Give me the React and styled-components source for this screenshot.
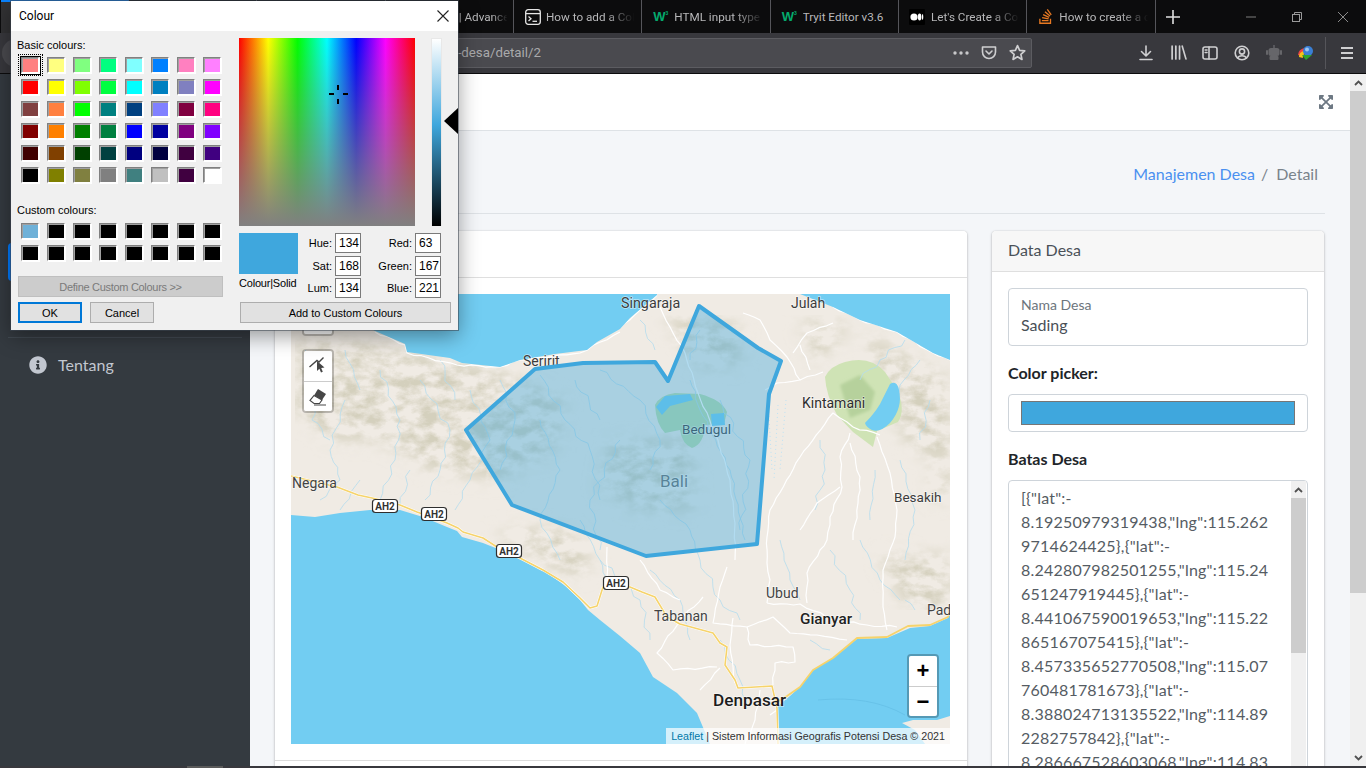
import React from 'react';
import styled, { createGlobalStyle } from 'styled-components';
import { FaInfoCircle, FaExpandArrowsAlt, FaStackOverflow } from 'react-icons/fa';

const Global = createGlobalStyle`
  html, body { margin: 0; padding: 0; overflow: hidden; background: #38383d; }
  * { box-sizing: border-box; }
`;

const Screen = styled.div`
  position: relative; width: 1366px; height: 768px; overflow: hidden;
  display: flex; flex-direction: column;
  font-family: Lato, "Open Sans", sans-serif; font-size: 16px; color: #212529;
`;

/* ---------- browser chrome ---------- */
const TabStrip = styled.div`
  height: 33px; flex: none; display: flex; background: #0c0c0d; padding-left: 0.7px;
`;
const Tab = styled.div`
  flex: 0 0 128.33px; height: 33px; display: flex; align-items: center; gap: 5px;
  padding-left: ${p => p.$pl || 10}px; padding-right: 4px; border-right: 1px solid #55555a;
  background: ${p => (p.$active ? '#323234' : 'transparent')};
  border-top: ${p => (p.$active ? '2px solid #0a84ff' : 'none')};
  font: 11.7px Roboto, sans-serif; color: #b8b8ba; overflow: hidden;
`;
const TabText = styled.span`
  flex: 1; min-width: 0; white-space: nowrap; overflow: hidden;
  ${p => !p.$full && `
    -webkit-mask-image: linear-gradient(90deg, #000 66%, transparent 97%);
    mask-image: linear-gradient(90deg, #000 66%, transparent 97%);
  `}
`;
const TabIcon = styled.span`
  flex: none; width: 17px; height: 16px; display: flex; align-items: center; justify-content: center; overflow: hidden;
`;
const W3 = styled.span`
  font: 900 13px/16px "Liberation Sans", sans-serif; color: #04aa6d; letter-spacing: -1px; white-space: nowrap;
  sup { font-size: 5px; line-height: 5px; vertical-align: 6px; margin-left: 1px; letter-spacing: 0; color: #04aa6d; }
`;
const NewTab = styled.div`
  width: 34px; display: flex; align-items: center; justify-content: center;
`;
const WindowControls = styled.div`
  margin-left: auto; display: flex;
`;
const WinButton = styled.div`
  width: 46px; height: 33px; display: flex; align-items: center; justify-content: center;
`;
const Toolbar = styled.div`
  height: 41px; flex: none; display: flex; align-items: center; padding-bottom: 1px;
  background: #38383d; border-bottom: 1px solid #0c0c0d;
`;
const BackCircle = styled.div`
  flex: none; width: 28px; height: 28px; margin-left: 2px; border-radius: 50%; background: #4a4a4f;
`;
const UrlBar = styled.div`
  flex: none; width: 892px; height: 30px; margin-left: 110px; display: flex; align-items: center;
  background: #4a4a4f; border: 1px solid #5c5c61; border-radius: 2px;
`;
const UrlText = styled.div`
  width: 400px; text-align: right; white-space: nowrap; overflow: hidden; direction: rtl;
  font: 13.3px/20px Roboto, sans-serif; color: #a9a9ab;
`;
const UrlActions = styled.div`
  margin-left: auto; display: flex;
`;
const ToolIcon = styled.div`
  flex: none; width: ${p => p.$w || 32}px; height: 28px; display: flex; align-items: center; justify-content: center;
`;
const ToolIcons = styled.div`
  margin-left: 98px; display: flex; align-items: center;
`;
const ToolSep = styled.div`
  width: 1px; height: 32px; background: #55555a; margin: 0 5px 0 3px;
`;

/* ---------- page ---------- */
const Page = styled.div`
  flex: 1; min-height: 0; display: flex; background: #f4f6f9;
`;
const Sidebar = styled.aside`
  flex: none; width: 250px; background: #343a40; padding: 169px 8px 0;
`;
const NavItem = styled.div`
  height: 38px; display: flex; align-items: center; gap: 11px; padding-left: 21px; margin-bottom: 4px;
  border-radius: 4px; color: #c2c7d0;
  background: ${p => (p.$active ? '#007bff' : 'transparent')};
  svg { font-size: 18px; flex: none; }
  span { margin-top: -2px; }
`;
const NavDivider = styled.div`
  height: 1px; background: #424a52; margin: 14px 0 8px;
`;
const Main = styled.main`
  flex: none; width: 1100px; display: flex; flex-direction: column; overflow: hidden;
`;
const Navbar = styled.div`
  flex: none; height: 57px; background: #fff; border-bottom: 1px solid #dee2e6;
  display: flex; align-items: center; justify-content: flex-end; padding-right: 16px;
  svg { color: #6d7883; font-size: 16px; }
`;
const ContentHeader = styled.div`
  flex: none; height: 83px; margin: 0 25px 0 16px; padding: 31px 7px 0 0;
  border-bottom: 1px solid #dee2e6; display: flex; justify-content: flex-end; line-height: 24px;
`;
const Crumb = styled.span`
  color: ${p => (p.$link ? '#4a90f0' : '#7a838b')};
`;
const CrumbSep = styled.span`
  color: #7a838b; padding: 0 8px 0 6px;
`;
const Columns = styled.div`
  flex: none; display: flex; gap: 25px; padding: 17px 26px 0 25px; align-items: flex-start;
`;
const Card = styled.section`
  flex: none; width: ${p => p.$w}px; background: #fff; border-radius: 4px;
  box-shadow: 0 0 1px rgba(0,0,0,.25), 0 1px 3px rgba(0,0,0,.25);
`;
const CardHeader = styled.div`
  height: ${p => p.$h}px; padding: 0 16px 3px; display: flex; align-items: center; color: #4a5158;
  background: ${p => (p.$plain ? '#fff' : '#f7f7f7')}; border-bottom: 1px solid #dfdfdf; border-radius: 4px 4px 0 0;
`;
const MapBody = styled.div`
  padding: 16px 17px 16px 16px;
`;
const CardFooter = styled.div`
  height: 40px; border-top: 1px solid #dcdcdc;
`;
const MapFrame = styled.div`
  position: relative; width: 659px; height: 450px; overflow: hidden; background: #f0ebe4;
  svg.tiles { display: block; }
`;
const DrawBar = styled.div`
  position: absolute; left: 11px; top: ${p => p.$top}px; width: 32px; border: 2px solid rgba(0,0,0,.22);
  border-radius: 4px; background-clip: padding-box; overflow: hidden;
`;
const DrawButton = styled.div`
  height: 30px; background: #fff; display: flex; align-items: center; justify-content: center;
  & + & { border-top: 1px solid #ccc; }
`;
const ZoomBar = styled.div`
  position: absolute; right: 11px; top: 360px; width: 32px; border: 2px solid rgba(0,0,0,.25);
  border-radius: 4px; background-clip: padding-box;
`;
const ZoomButton = styled.div`
  height: 30px; background: #fff; display: flex; align-items: center; justify-content: center;
  font: bold 22px/30px "Liberation Sans", sans-serif; color: #000;
  & + & { border-top: 1px solid #ccc; }
  &:first-child { border-radius: 2px 2px 0 0; }
  &:last-child { border-radius: 0 0 2px 2px; }
`;
const Attribution = styled.div`
  position: absolute; right: 0; bottom: 0; padding: 0 5px; height: 16px; background: rgba(255,255,255,.7);
  font: 10.7px/16px "Liberation Sans", sans-serif; color: #333; white-space: nowrap;
  span { color: #0078a8; }
`;
const DataBody = styled.div`
  padding: 16px;
`;
const FieldBox = styled.div`
  height: 58px; border: 1px solid #ced4da; border-radius: 4px; padding: 6px 12px;
`;
const FieldLabel = styled.div`
  font-size: 14px; line-height: 20px; color: #6c757d;
`;
const FieldValue = styled.div`
  font-size: 16px; line-height: 20px; color: #495057;
`;
const GroupLabel = styled.div`
  margin: 15px 0 9px; font-weight: 700; line-height: 24px; color: #212529;
`;
const ColorBox = styled.div`
  height: 38px; border: 1px solid #ced4da; border-radius: 4px; padding: 6px 12px;
`;
const ColorFill = styled.div`
  height: 24px; background: #3fa7dd; border: 1px solid #767676;
`;
const TextBox = styled.div`
  height: 420px; display: flex; border: 1px solid #ced4da; border-radius: 4px; padding-right: 1px;
`;
const TextLines = styled.div`
  flex: 1; padding: 5px 0 0 12px; color: #555c63; line-height: 24px; white-space: pre; overflow: hidden;
  letter-spacing: .2px;
`;
const MiniScroll = styled.div`
  flex: none; width: 15px; background: #f0f0f0; display: flex; flex-direction: column;
`;
const ScrollArrow = styled.div`
  height: 17px; flex: none; display: flex; align-items: center; justify-content: center;
`;
const MiniThumb = styled.div`
  height: 155px; flex: none; background: #cdcdcd;
`;
const PageScroll = styled.div`
  flex: 1; background: #f0f0f0; display: flex; flex-direction: column; overflow: hidden;
`;
const PageThumb = styled.div`
  height: 502px; flex: none; background: #cdcdcd;
`;
const PageDown = styled(ScrollArrow)`
  margin-top: auto;
`;
const BottomStrip = styled.div`
  height: 2px; flex: none; background: #38383d; padding-left: 187px;
`;
const BottomSeg = styled.div`
  width: 36px; height: 2px; background: #5a5a5a;
`;

/* ---------- colour dialog ---------- */
const Dialog = styled.div`
  position: absolute; left: 11px; top: 1px; width: 447px; height: 329px;
  background: #f0f0f0; box-shadow: 0 0 0 1px rgba(60,70,80,.55), 0 6px 20px rgba(0,0,0,.4);
  font: 11px/14px "Liberation Sans", Arial, sans-serif; color: #000; display: flex; flex-direction: column;
`;
const DialogTitle = styled.div`
  height: 30px; flex: none; background: #fff; display: flex; align-items: center; justify-content: space-between;
  padding: 0 9px 0 8px; font: 12px Roboto, sans-serif; color: #000;
`;
const DialogBody = styled.div`
  flex: 1; display: flex;
`;
const LeftPane = styled.div`
  flex: none; width: 228px; padding: 7px 0 0 6px;
`;
const RightPane = styled.div`
  flex: none; width: 219px; padding-top: 7px;
`;
const PaneLabel = styled.div`
  margin: ${p => p.$mt || 0}px 0 ${p => p.$mb || 0}px;
`;
const SwatchGrid = styled.div`
  display: grid; grid-template-columns: repeat(8, 18px); grid-auto-rows: 16px; gap: 6px 8px; padding-left: 4px;
`;
const Swatch = styled.div`
  position: relative; border-style: solid; border-width: 1px; border-color: #808080 #fff #fff #808080;
  box-shadow: inset 1px 1px 0 #a0a0a0, 1px 1px 0 #fff;
  background: ${p => p.$c};
  ${p => p.$sel && `
    &::before { content: ''; position: absolute; inset: -2px -3px -3px -2px; border: 1px solid #000; }
    &::after { content: ''; position: absolute; inset: -4px -5px -4px -4px; border: 1px dotted #000; }
  `}
`;
const WinButtonEl = styled.div`
  height: 21px; display: flex; align-items: center; justify-content: center; flex: none;
  width: ${p => p.$w}px;
  background: #e1e1e1; color: #000;
  border: ${p => (p.$def ? '2px solid #0078d7' : '1px solid #adadad')};
`;
const DefineButton = styled(WinButtonEl)`
  margin: 15px 0 0 1px; background: #cccccc; color: #7a7a7a; border-color: #bfbfbf; letter-spacing: -.3px;
`;
const ButtonRow = styled.div`
  display: flex; gap: 8px; margin: 5px 0 0 1px;
`;
const PickerRow = styled.div`
  position: relative; display: flex; gap: 16px;
`;
const Spectrum = styled.div`
  width: 176px; height: 188px;
  background:
    linear-gradient(180deg, rgba(128,128,128,0) 0%, #808080 100%),
    linear-gradient(90deg, #f00 0%, #ff0 16.6%, #0f0 33.3%, #0ff 50%, #00f 66.6%, #f0f 83.3%, #f00 100%);
  position: relative;
`;
const Cross = styled.div`
  position: absolute; left: ${p => p.$x}px; top: ${p => p.$y}px; width: ${p => p.$w}px; height: ${p => p.$h}px; background: #000;
`;
const LumBar = styled.div`
  width: 11px; height: 188px; border: 1px solid #e8e8e8; border-bottom: none;
  background: linear-gradient(180deg, #fff 0%, #3fa7dd 46%, #000 100%);
`;
const LumArrow = styled.div`
  position: absolute; left: 205px; top: 70px; width: 0; height: 0;
  border-style: solid; border-width: 13.5px 14px 13.5px 0; border-color: transparent #000 transparent transparent;
`;
const ValueGrid = styled.div`
  margin-top: 7px; display: grid;
  grid-template-columns: 59px 37px 26px 54px 26px; column-gap: 0;
  grid-auto-rows: 20px; row-gap: 2.5px;
`;
const PreviewCell = styled.div`
  grid-row: 1 / span 3;
`;
const Preview = styled.div`
  width: 59px; height: 41px; background: #3fa7dd;
`;
const PreviewLabel = styled.div`
  margin-top: 2px; white-space: nowrap; letter-spacing: -.2px;
`;
const ValueLabel = styled.div`
  text-align: right; padding-right: 3px; line-height: 20px;
`;
const ValueInput = styled.div`
  background: #fff; border: 1px solid #7a7a7a; padding-left: 3px; line-height: 18px; font-size: 12px;
`;
const AddRow = styled.div`
  margin: 4px 0 0 1px;
`;

/* ---------- data ---------- */
const basic = [
  '#ff8080', '#ffff80', '#80ff80', '#00ff80', '#80ffff', '#0080ff', '#ff80c0', '#ff80ff',
  '#ff0000', '#ffff00', '#80ff00', '#00ff40', '#00ffff', '#0080c0', '#8080c0', '#ff00ff',
  '#804040', '#ff8040', '#00ff00', '#008080', '#004080', '#8080ff', '#800040', '#ff0080',
  '#800000', '#ff8000', '#008000', '#008040', '#0000ff', '#0000a0', '#800080', '#8000ff',
  '#400000', '#804000', '#004000', '#004040', '#000080', '#000040', '#400040', '#400080',
  '#000000', '#808000', '#808040', '#808080', '#408080', '#c0c0c0', '#400040', '#ffffff',
];
const custom = ['#6fb1d8', ...Array(15).fill('#000000')];
const fields = [
  ['Hue:', '134', 'Red:', '63'],
  ['Sat:', '168', 'Green:', '167'],
  ['Lum:', '134', 'Blue:', '221'],
];
const batas = [
  '[{"lat":-',
  '8.19250979319438,"lng":115.262',
  '9714624425},{"lat":-',
  '8.242807982501255,"lng":115.24',
  '651247919445},{"lat":-',
  '8.441067590019653,"lng":115.22',
  '865167075415},{"lat":-',
  '8.457335652770508,"lng":115.07',
  '760481781673},{"lat":-',
  '8.388024713135522,"lng":114.89',
  '2282757842},{"lat":-',
  '8.286667528603068,"lng":114.83',
];
const tabs = [
  { active: true },
  {},
  {},
  { t: '| Advanced', pl: 73 },
  { t: 'How to add a Color', i: 'term' },
  { t: 'HTML input type color', i: 'w3' },
  { t: 'Tryit Editor v3.6', i: 'w3', full: true },
  { t: "Let's Create a Color", i: 'med' },
  { t: 'How to create a color', i: 'so' },
];

const coastN = 'M291,294 L291,300 L340,312 L375,331 L405,344 L407,352 L450,358 L462,363 L500,367 L520,360 L555,354 L587,350 L597,342 L620,329 L630,318 L657,295 L657,294 Z';
const coastNE = 'M800,294 L833,307 L860,320 L897,332 L933,353 L950,360 L950,294 Z';
const coastS = 'M291,515 L315,517 L340,513 L370,510 L400,510 L423,517 L447,527 L457,531 L462,537 L483,543 L493,547 L520,558 L547,573 L567,587 L580,600 L588,610 L600,620 L620,636 L640,653 L653,677 L677,693 L697,713 L710,744 L291,744 Z';
const coastE = 'M780,744 L777,707 L790,696 L800,687 L813,670 L833,658 L857,639 L887,638 L910,628 L930,626 L948,618 L950,613 L950,716 L937,720 L913,720 L902,723 L915,730 L925,744 Z';

const hills = [
  'M300,340 L380,345 L500,372 L565,400 L555,450 L500,480 L430,470 L380,440 L330,440 L295,410 Z',
  'M610,440 L690,440 L695,510 L640,510 L600,490 Z',
  'M665,315 L740,325 L740,365 L695,365 Z',
  'M800,320 L850,325 L815,365 Z',
  'M860,330 L950,380 L950,470 L905,440 L880,370 Z',
  'M930,470 L950,470 L950,500 L935,500 Z',
  'M880,555 L950,555 L950,610 L905,605 Z',
  'M495,530 L570,530 L595,570 L570,575 L520,550 Z',
];
const rivers = [
  '305,350 320,380 312,420 330,440', '345,400 330,450 340,480 320,500', '380,370 400,420 395,460 380,500',
  '420,380 450,430 440,470 425,500', '470,390 490,440 470,480 455,510', '540,375 565,420 590,450 600,500',
  '600,370 640,400 660,440 650,470', '620,440 590,500 600,550', '690,380 700,410 730,470 745,540',
  '720,400 750,460 740,530', '540,420 560,470 540,520 560,560', '905,340 880,360 860,380', '920,360 900,385 895,410',
  '600,560 640,600 650,640', '650,570 680,600 690,640', '700,560 720,600 740,620', '780,540 790,580 800,600',
  '830,550 850,590 860,620', '860,540 880,580 900,600', '905,600 915,610', '360,480 340,510', '410,470 400,505',
  '720,640 740,680 745,700', '810,640 830,650', '500,380 515,420 500,470', '640,320 655,350', '700,330 690,360',
  '900,460 915,510 905,560', '930,400 920,440', '345,350 360,390', '440,360 455,400', '580,520 600,560 610,590',
  '820,440 825,470 815,510', '875,470 870,520', '575,380 600,420', '660,500 690,530 700,560',
];
const roads = [
  '375,332 405,345 407,353 457,365 500,367 520,360 580,353 620,332', '620,328 640,310 657,295',
  '660,307 670,327 685,353 698,393 718,440 730,480 735,523 735,560',
  '743,313 760,320 770,340 787,357 800,380 777,383 765,390', '800,380 823,372', '833,307 860,320 897,332 933,353 950,360',
  '793,353 807,333 833,323', '810,370 800,345',
  '853,427 833,413 800,457 770,510 767,537 767,563 770,580 767,603',
  '850,433 840,457 842,487 830,517 827,540 820,550 807,573 807,603',
  '877,437 890,473 897,510 895,537 883,570 883,607 887,630', '850,443 860,477 858,503 853,540',
  '840,487 817,503 800,530', '767,603 787,604 800,604 833,620 867,625 897,627',
  '727,567 720,587 713,623 747,627 773,617 790,633 817,635 847,640', '747,627 750,645 793,647 795,662 775,663 773,685',
  '733,618 730,645 735,683', '703,597 680,620 657,653 673,670 717,667', '607,547 607,577', '853,427 880,435',
  '640,560 660,590 680,600', '700,690 720,668', '760,690 755,720 745,744', '795,700 770,715',
];
const highway = '291,476 337,487 358,495 372,498 400,505 417,512 447,523 458,528 463,532 483,538 497,547 520,558 543,570 563,582 580,598 590,608 597,606 603,587 630,587 642,592 655,597 667,617 680,624 713,633 720,643 727,647 725,665 735,680 738,688 772,686 777,708 778,744';
const highwayE = '777,702 787,696 800,687 813,670 833,658 857,638 887,637 908,626 930,625 948,617 950,612';
const labels = [
  ['Singaraja', 621, 308, 14.3, 400, '#3c3c3c'], ['Julah', 791, 308, 14, 400, '#3c3c3c'], ['Seririt', 523, 366, 14, 400, '#3c3c3c'],
  ['Kintamani', 802, 408, 14, 400, '#2e2e2e'], ['Bedugul', 682, 434, 13.5, 400, '#3a3a3a'], ['Bali', 660, 487, 17, 400, '#6a6a6a'],
  ['Negara', 292, 488, 14, 400, '#444'], ['Besakih', 894, 502, 13.5, 400, '#3c3c3c'], ['Ubud', 766, 598, 14, 400, '#444'],
  ['Tabanan', 654, 621, 14, 400, '#444'], ['Gianyar', 800, 624, 15.3, 500, '#222'], ['Denpasar', 713, 706, 17.2, 500, '#1c1c1c'],
  ['Pad', 927, 615, 14, 400, '#444'],
];
const shields = [[385, 506], [434, 514], [509, 551], [616, 583]];
const polygon = '699,306 758,348 781,361 769,394 757,544 646,556 512,505 466,430 535,369 583,363 655,362 668,381';

/* Roughens a hand-plotted line so that it reads as a river or a road. */
function wiggle(points, amp, seed) {
  const p = points.split(' ').map(s => s.split(',').map(Number));
  const out = [];
  p.slice(1).forEach(([x2, y2], i) => {
    const [x1, y1] = p[i];
    const dx = x2 - x1; const dy = y2 - y1;
    const len = Math.hypot(dx, dy) || 1;
    const steps = Math.max(1, Math.round(len / 7));
    for (let j = 0; j < steps; j += 1) {
      const t = j / steps;
      const k = j === 0 ? 0 : amp * (Math.sin(seed * 2.3 + j * 1.9) + 0.6 * Math.sin(seed + j * 4.7));
      out.push(`${(x1 + dx * t - (dy / len) * k).toFixed(1)},${(y1 + dy * t + (dx / len) * k).toFixed(1)}`);
    }
  });
  const last = p[p.length - 1];
  out.push(`${last[0]},${last[1]}`);
  return out.join(' ');
}
const riverLines = rivers.map((r, i) => wiggle(r, 1.8, i + 1));
const roadLines = roads.map((r, i) => wiggle(r, 0.7, i + 3));

function MapTiles() {
  return (
    <svg className="tiles" width="659" height="450" viewBox="291 294 659 450">
      <defs>
        <filter id="hillshade" x="0" y="0" width="1" height="1">
          <feTurbulence type="fractalNoise" baseFrequency=".055 .085" numOctaves="5" seed="11" result="noise" />
          <feColorMatrix in="noise" type="matrix" values="0 0 0 0 .66  0 0 0 0 .63  0 0 0 0 .51  2.8 0 0 0 -1.02" result="tint" />
          <feGaussianBlur in="SourceGraphic" stdDeviation="9" result="mask" />
          <feComposite in="tint" in2="mask" operator="in" />
        </filter>
        <filter id="soft"><feGaussianBlur stdDeviation="1.5" /></filter>
      </defs>
      <rect x="291" y="294" width="659" height="450" fill="#f0ebe4" />
      <g filter="url(#hillshade)" fill="#fff">
        {hills.map((d, i) => <path key={i} d={d} />)}
      </g>
      <path d="M825,377 Q830,366 845,362 Q870,355 885,372 L897,390 Q906,410 898,422 L877,431 L873,447 L853,432 L837,415 Q826,395 825,377 Z" fill="#cfe3b5" />
      <path d="M840,385 L860,375 L875,392 L870,410 L850,418 Z" fill="#b6d19c" filter="url(#soft)" />
      <path d="M655,405 Q660,395 675,393 L700,394 Q722,400 727,412 L724,424 L705,425 Q704,444 692,448 Q682,444 680,430 L665,433 Q656,424 655,405 Z" fill="#b9dcab" />
      <path d="M291,728 L300,744 L291,744 Z" fill="#d4e6b8" />
      <g fill="none" stroke="#b4dcee" strokeWidth=".8">
        {riverLines.map((p, i) => <polyline key={i} points={p} />)}
      </g>
      <g fill="none" stroke="#ffffff" strokeWidth="1.2" strokeLinejoin="round">
        {roadLines.map((p, i) => <polyline key={i} points={p} />)}
      </g>
      <g fill="none" stroke="#bfe3f4" strokeWidth="1" strokeDasharray="1 3">
        <path d="M768,400 L772,470 M778,405 L774,480 M786,400 L780,470" />
      </g>
      <g fill="#72cdf2">
        <path d={coastN} /><path d={coastNE} /><path d={coastS} /><path d={coastE} />
        <path d="M890,384 Q897,380 899,390 Q903,408 890,423 Q880,433 872,430 Q866,427 865,423 Q878,410 883,398 Z" />
        <path d="M656,407 L665,396 L690,394 L693,400 L670,406 L662,415 Z" />
        <path d="M711,414 L724,413 L725,425 L712,426 Z" />
      </g>
      <path d="M818,700 Q870,695 905,715" fill="none" stroke="#64bfe6" strokeWidth=".8" />
      <polyline points={highway} fill="none" stroke="#fff" strokeWidth="2.6" strokeLinejoin="round" />
      <polyline points={highway} fill="none" stroke="#f6d36b" strokeWidth="1.6" strokeLinejoin="round" />
      <polyline points={highwayE} fill="none" stroke="#f6d36b" strokeWidth="1.8" strokeLinejoin="round" />
      {labels.map(([t, x, y, s, w, c]) => (
        <text key={t} x={x} y={y} fontFamily="Roboto, sans-serif" fontSize={s} fontWeight={w} fill={c}
          stroke="rgba(255,255,255,.55)" strokeWidth="1.5" paintOrder="stroke">{t}</text>
      ))}
      {shields.map(([x, y]) => (
        <g key={x}>
          <rect x={x - 12.5} y={y - 6.5} width="25" height="13" rx="3" fill="#fff" stroke="#2e2e2e" strokeWidth="1.2" />
          <text x={x} y={y + 3.5} textAnchor="middle" fontFamily="Roboto, sans-serif" fontSize="10" fontWeight="700" fill="#333">AH2</text>
        </g>
      ))}
      <polygon points={polygon} fill="#3fa7dd" fillOpacity=".4" stroke="#3fa7dd" strokeWidth="4" strokeLinejoin="round" />
    </svg>
  );
}

const Chevron = ({ down, color = '#505050' }) => (
  <svg width="9" height="6" viewBox="0 0 9 6">
    <path d={down ? 'M1 1 L4.5 4.5 L8 1' : 'M1 5 L4.5 1.5 L8 5'} fill="none" stroke={color} strokeWidth="1.8" />
  </svg>
);

function TabGlyph({ kind }) {
  if (kind === 'term') return (
    <svg width="16" height="16" viewBox="0 0 16 16" fill="none" stroke="#e6e6e6" strokeWidth="1.3">
      <rect x=".7" y=".7" width="14.6" height="14.6" rx="2.5" />
      <path d="M1 4.6 H15" /><path d="M3.5 7.5 L6 9.7 L3.5 12" /><path d="M7.5 12.3 H12" />
    </svg>
  );
  if (kind === 'w3') return <W3>W<sup>3</sup></W3>;
  if (kind === 'med') return (
    <svg width="16" height="16" viewBox="0 0 16 16">
      <rect width="16" height="16" rx="1" fill="#000" />
      <circle cx="5" cy="8" r="3.6" fill="#fff" /><ellipse cx="10.6" cy="8" rx="1.8" ry="3.4" fill="#fff" /><ellipse cx="13.6" cy="8" rx=".7" ry="3" fill="#fff" />
    </svg>
  );
  if (kind === 'so') return <FaStackOverflow size={17} color="#e87922" />;
  return null;
}

const G = '#cfcfd1';
const Stroke = ({ children, size = 16, color = G, w = 1.6 }) => (
  <svg width={size} height={size} viewBox="0 0 16 16" fill="none" stroke={color} strokeWidth={w} strokeLinecap="round" strokeLinejoin="round">{children}</svg>
);

export default function App() {
  return (
    <Screen>
      <Global />
      <TabStrip>
        {tabs.map((t, i) => (
          <Tab key={i} $active={t.active} $pl={t.pl}>
            {t.i && <TabIcon><TabGlyph kind={t.i} /></TabIcon>}
            {t.t && <TabText $full={t.full}>{t.t}</TabText>}
          </Tab>
        ))}
        <NewTab>
          <svg width="14" height="14" viewBox="0 0 14 14"><path d="M7 0 V14 M0 7 H14" stroke="#e0e0e0" strokeWidth="1.6" /></svg>
        </NewTab>
        <WindowControls>
          <WinButton><svg width="10" height="10" viewBox="0 0 10 10"><path d="M0 5 H10" stroke="#7d7d7d" /></svg></WinButton>
          <WinButton><svg width="10" height="10" viewBox="0 0 10 10" fill="none" stroke="#9a9a9a"><rect x=".5" y="2.5" width="7" height="7" /><path d="M2.5 2.5 V.5 H9.5 V7.5 H7.5" /></svg></WinButton>
          <WinButton><svg width="10" height="10" viewBox="0 0 10 10"><path d="M0 0 L10 10 M10 0 L0 10" stroke="#8a8a8a" /></svg></WinButton>
        </WindowControls>
      </TabStrip>
      <Toolbar>
        <BackCircle />
        <UrlBar>
          <UrlText><bdi>manajemen-desa/detail/2</bdi></UrlText>
          <UrlActions>
            <ToolIcon $w={28}>
              <svg width="16" height="4" viewBox="0 0 16 4" fill="#c8c8ca"><circle cx="2" cy="2" r="1.7" /><circle cx="8" cy="2" r="1.7" /><circle cx="14" cy="2" r="1.7" /></svg>
            </ToolIcon>
            <ToolIcon $w={28}>
              <Stroke><path d="M1.5 2 H14.5 V7 A6.5 6.5 0 0 1 1.5 7 Z" /><path d="M5 6 L8 9 L11 6" /></Stroke>
            </ToolIcon>
            <ToolIcon $w={28}>
              <Stroke size={17}><path d="M8 1.5 L10 6 L14.8 6.5 L11.2 9.7 L12.2 14.5 L8 12 L3.8 14.5 L4.8 9.7 L1.2 6.5 L6 6 Z" /></Stroke>
            </ToolIcon>
          </UrlActions>
        </UrlBar>
        <ToolIcons>
          <ToolIcon><Stroke><path d="M8 1 V10.5 M3.5 6.5 L8 11 L12.5 6.5" /><path d="M2 14.5 H14" /></Stroke></ToolIcon>
          <ToolIcon><Stroke size={17}><path d="M2 2 V14 M5.5 2 V14 M9 2 V14 M11.5 2 L15 14" /></Stroke></ToolIcon>
          <ToolIcon><Stroke><rect x="1" y="2" width="14" height="12" rx="2" /><path d="M7 2 V14 M3.2 5 H5 M3.2 7.5 H5" /></Stroke></ToolIcon>
          <ToolIcon><Stroke><circle cx="8" cy="8" r="6.8" /><circle cx="8" cy="6.5" r="2.6" /><path d="M3.6 13 C5 10 11 10 12.4 13" /></Stroke></ToolIcon>
          <ToolIcon>
            <svg width="16" height="16" viewBox="0 0 16 16" fill="#66666a"><rect x="7.3" y="0" width="1.4" height="3" /><rect x="2.5" y="3" width="11" height="8" rx="2.5" /><rect x="0" y="5" width="2" height="5" rx="1" /><rect x="14" y="5" width="2" height="5" rx="1" /><rect x="3.5" y="11" width="9" height="4" rx="1" /></svg>
          </ToolIcon>
          <ToolIcon>
            <svg width="18" height="16" viewBox="0 0 18 16">
              <path d="M1 10 A8 7 0 0 1 8 3 L8 7 A4 4 0 0 0 4 11 Z" fill="#e44" />
              <path d="M2 12 A6 6 0 0 1 7 6 L8 9 A3 3 0 0 0 6 13 Z" fill="#f5c518" />
              <circle cx="11" cy="6" r="5" fill="#3a7fd5" /><circle cx="10" cy="4.5" r="2" fill="#9cc7f2" />
              <path d="M5 10 L15 10 L9 15 Z" fill="#2da52d" />
            </svg>
          </ToolIcon>
          <ToolSep />
          <ToolIcon><svg width="12" height="12" viewBox="0 0 12 12"><path d="M0 1 H12 M0 6 H12 M0 11 H12" stroke={G} strokeWidth="1.8" /></svg></ToolIcon>
        </ToolIcons>
      </Toolbar>

      <Page>
        <Sidebar>
          <NavItem $active />
          <NavItem />
          <NavDivider />
          <NavItem><FaInfoCircle /><span>Tentang</span></NavItem>
        </Sidebar>
        <Main>
          <Navbar><FaExpandArrowsAlt /></Navbar>
          <ContentHeader>
            <Crumb $link>Manajemen Desa</Crumb><CrumbSep>/</CrumbSep><Crumb>Detail</Crumb>
          </ContentHeader>
          <Columns>
            <Card $w={692}>
              <CardHeader $h={47} $plain />
              <MapBody>
                <MapFrame>
                  <MapTiles />
                  <DrawBar $top={8}><DrawButton /></DrawBar>
                  <DrawBar $top={55}>
                    <DrawButton>
                      <svg width="20" height="20" viewBox="0 0 20 20">
                        <path d="M1.5 11 L9 4.5 L11 6 L15.5 1.5" fill="none" stroke="#464646" strokeWidth="1.4" />
                        <path d="M9 5 L9 15 L11.4 12.8 L13 16.5 L14.8 15.7 L13.2 12 L16.5 11.6 Z" fill="#464646" />
                      </svg>
                    </DrawButton>
                    <DrawButton>
                      <svg width="20" height="20" viewBox="0 0 20 20">
                        <path d="M10 2 L18 7 L14 13 L6 8.5 Z" fill="#464646" />
                        <path d="M6 8.5 L14 13 L11.5 16.5 L6 16.5 L2 13.5 Z" fill="#fff" stroke="#464646" strokeWidth="1.2" />
                        <path d="M6 18 H18" stroke="#464646" strokeWidth="1.2" />
                      </svg>
                    </DrawButton>
                  </DrawBar>
                  <ZoomBar><ZoomButton>+</ZoomButton><ZoomButton>−</ZoomButton></ZoomBar>
                  <Attribution><span>Leaflet</span> | Sistem Informasi Geografis Potensi Desa © 2021</Attribution>
                </MapFrame>
              </MapBody>
              <CardFooter />
            </Card>
            <Card $w={332}>
              <CardHeader $h={41}>Data Desa</CardHeader>
              <DataBody>
                <FieldBox>
                  <FieldLabel>Nama Desa</FieldLabel>
                  <FieldValue>Sading</FieldValue>
                </FieldBox>
                <GroupLabel>Color picker:</GroupLabel>
                <ColorBox><ColorFill /></ColorBox>
                <GroupLabel>Batas Desa</GroupLabel>
                <TextBox>
                  <TextLines>{batas.join('\n')}</TextLines>
                  <MiniScroll>
                    <ScrollArrow><Chevron /></ScrollArrow>
                    <MiniThumb />
                  </MiniScroll>
                </TextBox>
              </DataBody>
            </Card>
          </Columns>
        </Main>
        <PageScroll>
          <ScrollArrow><Chevron /></ScrollArrow>
          <PageThumb />
          <PageDown><Chevron down /></PageDown>
        </PageScroll>
      </Page>
      <BottomStrip><BottomSeg /></BottomStrip>

      <Dialog>
        <DialogTitle>
          <span>Colour</span>
          <svg width="12" height="12" viewBox="0 0 12 12"><path d="M.5 .5 L11.5 11.5 M11.5 .5 L.5 11.5" stroke="#222" strokeWidth="1.1" /></svg>
        </DialogTitle>
        <DialogBody>
          <LeftPane>
            <PaneLabel $mb={5}>Basic colours:</PaneLabel>
            <SwatchGrid>
              {basic.map((c, i) => <Swatch key={i} $c={c} $sel={i === 0} />)}
            </SwatchGrid>
            <PaneLabel $mt={20} $mb={6}>Custom colours:</PaneLabel>
            <SwatchGrid>
              {custom.map((c, i) => <Swatch key={i} $c={c} />)}
            </SwatchGrid>
            <DefineButton $w={205}>Define Custom Colours &gt;&gt;</DefineButton>
            <ButtonRow>
              <WinButtonEl $def $w={64}>OK</WinButtonEl>
              <WinButtonEl $w={64}>Cancel</WinButtonEl>
            </ButtonRow>
          </LeftPane>
          <RightPane>
            <PickerRow>
              <Spectrum>
                <Cross $x={98} $y={47} $w={2} $h={5} />
                <Cross $x={98} $y={61} $w={2} $h={5} />
                <Cross $x={90} $y={55} $w={5} $h={2} />
                <Cross $x={104} $y={55} $w={5} $h={2} />
              </Spectrum>
              <LumBar />
              <LumArrow />
            </PickerRow>
            <ValueGrid>
              <PreviewCell>
                <Preview />
                <PreviewLabel>Colour|Solid</PreviewLabel>
              </PreviewCell>
              {fields.map(([a, b, c, d]) => (
                <React.Fragment key={a}>
                  <ValueLabel>{a}</ValueLabel>
                  <ValueInput>{b}</ValueInput>
                  <ValueLabel>{c}</ValueLabel>
                  <ValueInput>{d}</ValueInput>
                </React.Fragment>
              ))}
            </ValueGrid>
            <AddRow><WinButtonEl $w={211}>Add to Custom Colours</WinButtonEl></AddRow>
          </RightPane>
        </DialogBody>
      </Dialog>
    </Screen>
  );
}
